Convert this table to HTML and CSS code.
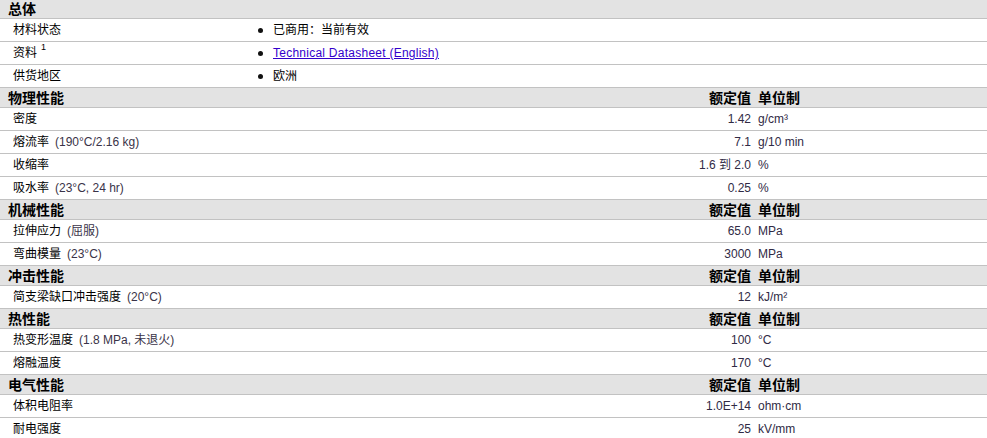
FILE: index.html
```html
<!DOCTYPE html>
<html lang="zh-CN">
<head>
<meta charset="utf-8">
<title>材料数据</title>
<link rel="stylesheet" href="styles.css">
</head>
<body>
<div class="sheet">
  <div class="hdr first"><span class="ttl">总体</span></div>
  <div class="row gen"><span class="lbl">材料状态</span><span class="info"><span class="dot"></span>已商用：当前有效</span></div>
  <div class="row gen"><span class="lbl">资料<sup class="sup">1</sup></span><span class="info"><span class="dot"></span><a class="link" href="#">Technical Datasheet (English)</a></span></div>
  <div class="row gen"><span class="lbl">供货地区</span><span class="info"><span class="dot"></span>欧洲</span></div>

  <div class="hdr"><span class="ttl">物理性能</span><span class="val">额定值</span><span class="unit">单位制</span></div>
  <div class="row"><span class="lbl">密度</span><span class="val">1.42</span><span class="unit">g/cm³</span></div>
  <div class="row"><span class="lbl">熔流率<span class="cond">(190°C/2.16 kg)</span></span><span class="val">7.1</span><span class="unit">g/10 min</span></div>
  <div class="row"><span class="lbl">收缩率</span><span class="val">1.6 到 2.0</span><span class="unit">%</span></div>
  <div class="row"><span class="lbl">吸水率<span class="cond">(23°C, 24 hr)</span></span><span class="val">0.25</span><span class="unit">%</span></div>

  <div class="hdr"><span class="ttl">机械性能</span><span class="val">额定值</span><span class="unit">单位制</span></div>
  <div class="row"><span class="lbl">拉伸应力<span class="cond">(屈服)</span></span><span class="val">65.0</span><span class="unit">MPa</span></div>
  <div class="row"><span class="lbl">弯曲模量<span class="cond">(23°C)</span></span><span class="val">3000</span><span class="unit">MPa</span></div>

  <div class="hdr"><span class="ttl">冲击性能</span><span class="val">额定值</span><span class="unit">单位制</span></div>
  <div class="row"><span class="lbl">简支梁缺口冲击强度<span class="cond">(20°C)</span></span><span class="val">12</span><span class="unit">kJ/m²</span></div>

  <div class="hdr"><span class="ttl">热性能</span><span class="val">额定值</span><span class="unit">单位制</span></div>
  <div class="row"><span class="lbl">热变形温度<span class="cond">(1.8 MPa, 未退火)</span></span><span class="val">100</span><span class="unit">°C</span></div>
  <div class="row"><span class="lbl">熔融温度</span><span class="val">170</span><span class="unit">°C</span></div>

  <div class="hdr"><span class="ttl">电气性能</span><span class="val">额定值</span><span class="unit">单位制</span></div>
  <div class="row"><span class="lbl">体积电阻率</span><span class="val">1.0E+14</span><span class="unit">ohm·cm</span></div>
  <div class="row"><span class="lbl">耐电强度</span><span class="val">25</span><span class="unit">kV/mm</span></div>
</div>
</body>
</html>
```
FILE: styles.css
```css
html, body {
  margin: 0;
  padding: 0;
  overflow: hidden;
  background: #ffffff;
}
body {
  font-family: "Liberation Sans", "Noto Sans CJK SC", sans-serif;
  font-size: 12px;
  line-height: 14px;
  color: #000;
}
.sheet {
  display: flex;
  flex-direction: column;
}
.hdr, .row {
  display: flex;
  align-items: center;
  border-bottom: 1px solid #c2c2c2;
  box-sizing: border-box;
  white-space: nowrap;
}
.hdr {
  height: 20px;
  background: #e3e3e3;
  font-weight: bold;
  font-size: 14px;
  line-height: 16px;
}
.hdr.first {
  height: 19px;
}
.hdr .ttl {
  flex: 1;
  padding-left: 8px;
}
.row {
  height: 23px;
}
.lbl {
  flex: 1;
  padding-left: 13px;
}
.gen .lbl {
  flex: 0 0 245px;
}
.info {
  display: flex;
  align-items: center;
}
.dot {
  width: 5px;
  height: 5px;
  border-radius: 50%;
  background: #111;
  margin-right: 10px;
}
.link {
  color: #3300cc;
  text-decoration: underline;
  letter-spacing: 0.25px;
}
.sup {
  font-size: 9px;
  line-height: 9px;
  vertical-align: top;
  position: relative;
  top: -3px;
  margin-left: 4px;
}
.cond {
  color: #3a3348;
  margin-left: 6px;
}
.val {
  text-align: right;
  color: #302a45;
}
.unit {
  flex: 0 0 229px;
  margin-left: 7px;
  color: #302a45;
}
.hdr .val, .hdr .unit {
  color: #000;
}
```
